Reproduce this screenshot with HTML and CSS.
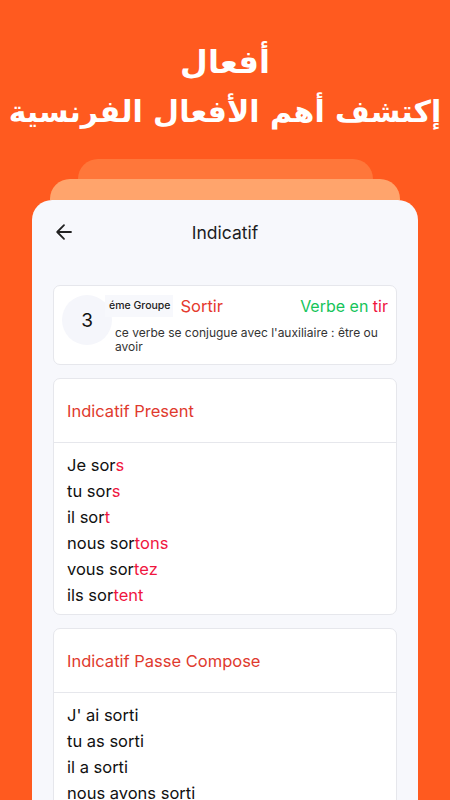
FILE: index.html
```html
<!DOCTYPE html>
<html lang="fr">
<head>
<meta charset="utf-8">
<link rel="stylesheet" href="styles.css">
</head>
<body>
<div class="screen">
  <div class="hero" dir="rtl">
    <div class="hero-line1">أفعال</div>
    <div class="hero-line2">إكتشف أهم الأفعال الفرنسية</div>
  </div>
  <div class="stack">
    <div class="layer layer-back"></div>
    <div class="layer layer-mid"></div>
    <div class="phone">
      <div class="topbar">
        <svg class="back" width="20" height="20" viewBox="0 0 20 20"><path d="M17 10H3.5M10 3.2L3.2 10L10 16.8" fill="none" stroke="#222" stroke-width="1.8" stroke-linecap="round" stroke-linejoin="round"/></svg>
        <div class="topbar-title">Indicatif</div>
      </div>
      <div class="content">
        <div class="info">
          <div class="circle">3</div>
          <div class="info-main">
            <div class="info-top">
              <span class="group">éme Groupe</span>
              <span class="verb">Sortir</span>
              <span class="ending">Verbe en <span class="suf">tir</span></span>
            </div>
            <div class="desc">ce verbe se conjugue avec l'auxiliaire : être ou avoir</div>
          </div>
        </div>
        <div class="card">
          <div class="card-head">Indicatif Present</div>
          <div class="card-body">
            <div class="row">Je sor<span class="suf">s</span></div>
            <div class="row">tu sor<span class="suf">s</span></div>
            <div class="row">il sor<span class="suf">t</span></div>
            <div class="row">nous sor<span class="suf">tons</span></div>
            <div class="row">vous sor<span class="suf">tez</span></div>
            <div class="row">ils sor<span class="suf">tent</span></div>
          </div>
        </div>
        <div class="card">
          <div class="card-head">Indicatif Passe Compose</div>
          <div class="card-body">
            <div class="row">J' ai sorti</div>
            <div class="row">tu as sorti</div>
            <div class="row">il a sorti</div>
            <div class="row">nous avons sorti</div>
          </div>
        </div>
      </div>
    </div>
  </div>
</div>
</body>
</html>
```
FILE: styles.css
```css
* { box-sizing: border-box; }
html, body { margin: 0; padding: 0; }
body {
  width: 450px;
  height: 800px;
  overflow: hidden;
  background: #FF5A1F;
  font-family: Inter, "Noto Sans", sans-serif;
}
.screen { width: 450px; height: 800px; display: flex; flex-direction: column; }
.hero {
  color: #fff;
  text-align: center;
  font-family: "DejaVu Sans", "Noto Sans", sans-serif;
  font-weight: bold;
  padding-top: 38px;
  white-space: nowrap;
}
.hero-line1 { font-size: 32px; line-height: 48px; }
.hero-line2 { font-size: 30px; line-height: 48px; margin-top: 2px; }
.stack { display: flex; flex-direction: column; align-items: center; margin-top: 23px; flex: 1; min-height: 0; }
.layer { border-radius: 20px 20px 0 0; flex: none; }
.layer-back { width: 295px; height: 20px; background: #FF773A; }
.layer-mid { width: 350px; height: 21px; background: #FFA46C; }
.phone {
  width: 386px;
  flex: 1;
  background: #F7F8FC;
  border-radius: 20px 20px 0 0;
  overflow: hidden;
}
.topbar { height: 64px; position: relative; display: flex; align-items: center; justify-content: center; }
.back { position: absolute; left: 22px; top: 22px; }
.topbar-title { font-size: 17.5px; color: #1d1d1f; }
.content { padding: 21px 21px 0; display: flex; flex-direction: column; gap: 13px; }
.info {
  background: #fff;
  border: 1px solid #e6e7ec;
  border-radius: 7px;
  height: 80px;
  padding: 9px 8px 0 8px;
  display: flex;
}
.circle {
  width: 50px; height: 50px; border-radius: 50%;
  background: #F5F6FB;
  flex: none;
  display: flex; align-items: center; justify-content: center;
  font-size: 19px; color: #111;
}
.info-main { flex: 1; margin-left: -7px; position: relative; }
.info-top { display: flex; align-items: center; height: 22px; }
.group {
  background: #F7F8FC;
  font-size: 10.5px;
  font-weight: 500;
  color: #222;
  height: 22px;
  line-height: 22px;
  padding: 0 2px 0 4px;
  margin-right: 8px;
}
.verb { color: #E53A2E; font-size: 16.5px; }
.ending { margin-left: auto; color: #16C45A; font-size: 16px; }
.ending .suf { color: #F0163F; }
.desc { font-size: 12px; line-height: 14px; color: #333; padding-left: 10px; margin-top: 9px; }
.card {
  background: #fff;
  border: 1px solid #e6e7ec;
  border-radius: 7px;
  flex: none;
}
.card-head {
  height: 64px;
  border-bottom: 1px solid #e6e7ec;
  display: flex; align-items: center;
  padding-left: 13px;
  color: #E03A2E;
  font-size: 16.5px;
}
.card-body { padding: 9px 13px 6px; }
.row { font-size: 16.5px; line-height: 26px; color: #111; }
.suf { color: #F0163F; }
```
